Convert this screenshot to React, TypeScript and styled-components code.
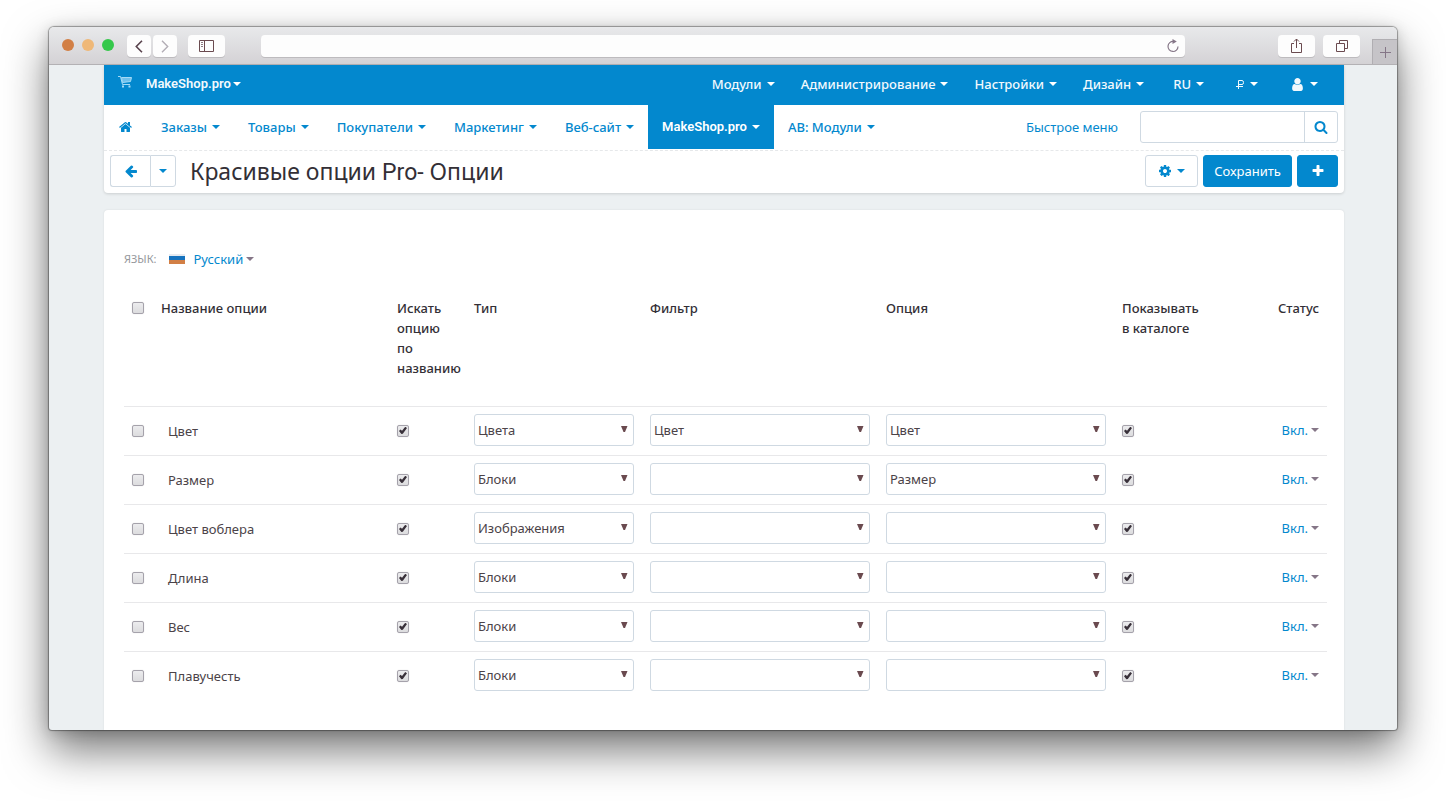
import React from "react";
import styled, { createGlobalStyle, css } from "styled-components";

const blue = "#0388ce";
const line = "#cfd9e2";

const GlobalStyle = createGlobalStyle`
  * { box-sizing: border-box; }
  body {
    margin: 0;
    background: #fff;
    color: #4b4348;
    font-family: "Noto Sans", "Open Sans", sans-serif;
    font-size: 13px;
    line-height: 20px;
  }
  button, input, select { font: inherit; color: inherit; margin: 0; }
  button { cursor: pointer; }
  a { color: ${blue}; text-decoration: none; }
`;

const Desktop = styled.div`
  padding: 27px 49px 71px;
`;

const BrowserWindow = styled.div`
  border-radius: 5px 5px 3px 3px;
  overflow: hidden;
  background: #ecf0f2;
  box-shadow:
    0 0 1px 1px rgba(0, 0, 0, 0.35),
    0 2px 14px rgba(0, 0, 0, 0.16),
    0 20px 44px rgba(0, 0, 0, 0.54);
`;

const Chrome = styled.div`
  display: flex;
  align-items: flex-start;
  height: 38px;
  padding: 8px 0 0 13px;
  border-bottom: 1px solid #b3b1b4;
  background: linear-gradient(#e8e9eb, #d4d2d5);
`;

const Lights = styled.div`
  display: flex;
  gap: 8px;
  padding: 4px 13px 0 0;
`;

const Light = styled.span<{ $color: string }>`
  width: 12px;
  height: 12px;
  border-radius: 50%;
  background: ${(p) => p.$color};
`;

const ChromeButton = styled.button<{ $wide?: boolean }>`
  display: flex;
  align-items: center;
  justify-content: center;
  width: ${(p) => (p.$wide ? 37 : 24)}px;
  height: 22px;
  padding: 0;
  border: 0;
  border-radius: 4px;
  background: #fdfdfd;
  box-shadow: 0 1px 0 #bdbbbe;
`;

const ChromeGroup = styled.div<{ $gap: number }>`
  display: flex;
  gap: ${(p) => p.$gap}px;
`;

const AddressBar = styled.div`
  display: flex;
  flex: 1;
  align-items: center;
  height: 22px;
  margin: 0 93px 0 36px;
  padding-right: 5px;
  border-radius: 4px;
  background: #fdfdfd;
  box-shadow: 0 1px 0 #bdbbbe;
`;

const Address = styled.input`
  flex: 1;
  min-width: 0;
  height: 22px;
  padding: 0 8px;
  border: 0;
  outline: 0;
  background: none;
`;

const PlainButton = styled.button`
  display: flex;
  padding: 0;
  border: 0;
  background: none;
`;

const NewTab = styled.button`
  display: flex;
  align-items: center;
  justify-content: center;
  align-self: flex-end;
  width: 25px;
  height: 25px;
  margin-left: 12px;
  padding: 0;
  border: 1px solid #b0aeb2;
  border-width: 1px 0 0 1px;
  background: #c6c4c8;
`;

const Spacer = styled.span`
  width: 11px;
`;

const Page = styled.div`
  padding: 0 53px 0 55px;
`;

const Header = styled.header`
  margin-bottom: 17px;
  border-radius: 0 0 4px 4px;
  background: #fff;
  box-shadow: 0 1px 3px rgba(0, 0, 0, 0.14);
`;

const TopBar = styled.nav`
  display: flex;
  align-items: stretch;
  height: 40px;
  padding: 0 10px 2px 0;
  background: ${blue};
`;

const Caret = styled.span<{ $color?: string }>`
  flex: none;
  width: 8px;
  border: 4px solid transparent;
  border-top-color: ${(p) => p.$color ?? "currentColor"};
  border-bottom: 0;
`;

const TopLink = styled.a<{ $compact?: boolean }>`
  display: flex;
  align-items: center;
  gap: 5px;
  padding: 0 ${(p) => (p.$compact ? 16 : 13)}px;
  color: #f2f9fd;
  font-weight: 500;
  ${Caret} { color: #fff; }
`;

const CartLink = styled(TopLink)`
  padding: 0 0 4px 14px;
`;

const BrandLink = styled(TopLink)`
  gap: 2px;
  padding-left: 14px;
`;

const Latin = styled.span`
  font-family: Roboto, sans-serif;
  font-weight: 600;
`;

const Push = styled.span`
  flex: 1;
`;

const NavBar = styled.nav`
  display: flex;
  align-items: flex-start;
  height: 46px;
  padding: 0 6px 0 1px;
  border-bottom: 1px dashed #e6e8ea;
`;

const NavLink = styled.a<{ $active?: boolean }>`
  display: flex;
  align-items: center;
  gap: 5px;
  height: 44px;
  padding: 0 14px;
  font-weight: 500;
  ${(p) => p.$active && css`
    background: ${blue};
    color: #fff;
  `}
`;

const QuickLink = styled.a`
  margin: 12px 22px 0 0;
`;

const Search = styled.form`
  display: flex;
  width: 198px;
  height: 32px;
  margin-top: 6px;
  border: 1px solid ${line};
  border-radius: 3px;
`;

const SearchInput = styled.input`
  flex: 1;
  min-width: 0;
  padding: 0 8px;
  border: 0;
  border-right: 1px solid ${line};
  outline: 0;
  background: none;
`;

const SearchButton = styled.button`
  display: flex;
  align-items: center;
  justify-content: center;
  width: 32px;
  padding: 0;
  border: 0;
  background: none;
  color: ${blue};
`;

const TitleRow = styled.div`
  display: flex;
  gap: 5px;
  height: 42px;
  padding: 4px 6px 6px;
`;

const Button = styled.button<{ $primary?: boolean; $width: number }>`
  display: flex;
  align-items: center;
  justify-content: center;
  gap: 5px;
  width: ${(p) => p.$width}px;
  height: 32px;
  padding: 0;
  border: 1px solid ${(p) => (p.$primary ? blue : line)};
  border-radius: 3px;
  background: ${(p) => (p.$primary ? blue : "#fff")};
  color: ${(p) => (p.$primary ? "#fff" : blue)};
`;

const ButtonGroup = styled.div`
  display: flex;
  margin-right: 9px;
  ${Button}:first-child { border-radius: 3px 0 0 3px; border-right: 0; }
  ${Button}:last-child { border-radius: 0 3px 3px 0; }
`;

const Title = styled.h1`
  flex: 1;
  margin: 0;
  color: #332f36;
  font-size: 23px;
  font-weight: 400;
  line-height: 32px;
  span { font-family: Roboto, sans-serif; }
`;

const Panel = styled.main`
  padding: 39px 17px 30px 20px;
  border-radius: 4px 4px 0 0;
  background: #fff;
  box-shadow: 0 0 2px rgba(0, 0, 0, 0.1);
`;

const LanguageRow = styled.div`
  display: flex;
  align-items: center;
  height: 20px;
  margin-bottom: 21px;
`;

const LanguageLabel = styled.span`
  margin-right: 13px;
  color: #96989c;
  font-size: 11px;
  text-transform: uppercase;
`;

const MenuLink = styled.a<{ $gap: number }>`
  display: inline-flex;
  align-items: center;
  gap: ${(p) => p.$gap}px;
`;

const Flag = styled.svg`
  margin-right: 5px;
`;

const Table = styled.table`
  width: 100%;
  border-collapse: collapse;
  table-layout: fixed;
`;

const Col = styled.col<{ $width?: number }>`
  width: ${(p) => (p.$width ? `${p.$width}px` : "auto")};
`;

const HeadCell = styled.th<{ $right?: boolean }>`
  height: 116px;
  padding: 8px;
  color: #332f36;
  font-weight: 500;
  text-align: ${(p) => (p.$right ? "right" : "left")};
  vertical-align: top;
`;

const Cell = styled.td<{ $right?: boolean; $name?: boolean }>`
  height: 49px;
  padding: ${(p) => (p.$name ? "0 8px 0 15px" : "0 8px 2px")};
  border-top: 1px solid #e8e8ea;
  text-align: ${(p) => (p.$right ? "right" : "left")};
  vertical-align: middle;
`;

const Checkbox = styled.input.attrs({ type: "checkbox" })`
  appearance: none;
  display: block;
  width: 12px;
  height: 12px;
  margin: 4px 0 2px;
  border: 1px solid #a5a2ab;
  border-radius: 2px;
  background: linear-gradient(#ececee, #dcdcde);
  box-shadow: 0 0 1px rgba(0, 0, 0, 0.2);
  &:checked::after {
    content: "";
    display: block;
    height: 8px;
    margin: 1px;
    background: #39313a;
    clip-path: polygon(0 55%, 18% 36%, 38% 52%, 78% 2%, 100% 18%, 48% 92%, 30% 94%);
  }
`;

const SelectWrap = styled.div`
  display: grid;
  align-items: center;
  > * { grid-area: 1 / 1; }
`;

const Select = styled.select`
  appearance: none;
  width: 100%;
  height: 32px;
  padding: 0 24px 0 3px;
  border: 1px solid ${line};
  border-radius: 3px;
  background: #fff;
`;

const Arrow = styled.svg`
  justify-self: end;
  margin-right: 6px;
  pointer-events: none;
`;

const icons = {
  home: "M1408 992v480q0 26-19 45t-45 19H960v-384H704v384H320q-26 0-45-19t-19-45V992q0-1 .5-3t.5-3l575-474 575 474q1 2 1 6zm223-69l-62 74q-8 9-21 11h-3q-13 0-21-7L832 424l-692 577q-12 8-24 7-13-2-21-11l-62-74q-8-10-7-23.500T37 878l719-599q32-26 76-26t76 26l244 204V288q0-14 9-23t23-9h192q14 0 23 9t9 23v408l219 182q10 8 11 21.500t-7 23.500z",
  user: "M1536 1399q0 109-62.500 187t-150.500 78H469q-88 0-150.500-78T256 1399q0-85 8.500-160.500t31.500-152 58.500-131 94-89T583 832q131 128 313 128t313-128q76 0 134.500 34.500t94 89 58.500 131 31.500 152 8.500 160.500zm-256-887q0 159-112.500 271.500T896 896 624.500 783.500 512 512t112.500-271.500T896 128t271.500 112.500T1280 512z",
  back: "M1664 896v128q0 53-32.500 90.500t-84.500 37.500H843l293 294q38 36 38 90t-38 90l-75 76q-37 37-90 37-52 0-91-37L229 1051q-37-37-37-91 0-53 37-90l651-652q38-37 91-37 52 0 90 37l75 75q38 38 38 91t-38 91L843 768h704q52 0 84.500 37.500T1664 896z",
  plus: "M1600 736v192q0 40-28 68t-68 28h-416v416q0 40-28 68t-68 28H800q-40 0-68-28t-28-68v-416H288q-40 0-68-28t-28-68V736q0-40 28-68t68-28h416V224q0-40 28-68t68-28h192q40 0 68 28t28 68v416h416q40 0 68 28t28 68z",
  search: "M1216 832q0-185-131.500-316.500T768 384 451.500 515.500 320 832t131.500 316.500T768 1280t316.500-131.500T1216 832zm512 832q0 52-38 90t-90 38q-54 0-90-38l-343-342q-179 124-399 124-143 0-273.500-55.500t-225-150-150-225T64 832t55.500-273.500 150-225 225-150T768 128t273.500 55.500 225 150 150 225T1472 832q0 220-124 399l343 343q37 37 37 90z",
  cog: "M1152 896q0-106-75-181t-181-75-181 75-75 181 75 181 181 75 181-75 75-181zm512-109v222q0 12-8 23t-20 13l-185 28q-19 54-39 91 35 50 107 138 10 12 10 25t-9 23q-27 37-99 108t-94 71q-12 0-26-9l-138-108q-44 23-91 38-16 136-29 186-7 28-36 28H785q-14 0-24.500-8.500T749 1634l-28-184q-49-16-90-37l-141 107q-10 9-25 9-14 0-25-11-126-114-165-168-7-10-7-23 0-12 8-23 15-21 51-66.500t54-70.500q-27-50-41-99l-183-27q-13-2-21-12.500t-8-23.500V783q0-12 8-23t19-13l186-28q14-46 39-92-40-57-107-138-10-12-10-24 0-10 9-23 26-36 98.500-107.500T465 263q13 0 26 10l138 107q44-23 91-38 16-136 29-186 7-28 36-28h222q14 0 24.500 8.500T1043 158l28 184q49 16 90 37l142-107q9-9 24-9 13 0 25 10 129 119 165 170 7 8 7 22 0 12-8 23-15 21-51 66.500t-54 70.500q26 50 41 98l183 28q13 2 21 12.500t8 23.500z",
};

function Icon({ name, size = 14 }: { name: keyof typeof icons; size?: number }) {
  return (
    <svg width={size} height={size} viewBox="0 0 1792 1792" fill="currentColor" aria-hidden="true">
      <path d={icons[name]} />
    </svg>
  );
}

const topMenu = ["Модули", "Администрирование", "Настройки", "Дизайн"];
const mainMenu = ["Заказы", "Товары", "Покупатели", "Маркетинг", "Веб-сайт"];
const rows = [
  { name: "Цвет", type: "Цвета", filter: "Цвет", option: "Цвет" },
  { name: "Размер", type: "Блоки", filter: "", option: "Размер" },
  { name: "Цвет воблера", type: "Изображения", filter: "", option: "" },
  { name: "Длина", type: "Блоки", filter: "", option: "" },
  { name: "Вес", type: "Блоки", filter: "", option: "" },
  { name: "Плавучесть", type: "Блоки", filter: "", option: "" },
];
const types = ["Цвета", "Блоки", "Изображения"];
const names = ["", "Цвет", "Размер"];

function Dropdown({ label, value, options }: { label: string; value: string; options: string[] }) {
  return (
    <SelectWrap>
      <Select aria-label={label} defaultValue={value}>
        {options.map((o) => <option key={o} value={o}>{o}</option>)}
      </Select>
      <Arrow width="7" height="7" viewBox="0 0 7 7" aria-hidden="true">
        <path d="M0 0h6.500L4 6H2.500z" fill="#6a4a4f" />
      </Arrow>
    </SelectWrap>
  );
}

function BrowserChrome() {
  return (
    <Chrome>
      <Lights>
        <Light $color="#d27f45" />
        <Light $color="#efb878" />
        <Light $color="#35c84b" />
      </Lights>
      <ChromeGroup $gap={2}>
        <ChromeButton aria-label="Назад">
          <svg width="8" height="13" viewBox="0 0 8 13" fill="none" stroke="#59434d" strokeWidth="1.600"><path d="M7 .8 1.300 6.500 7 12.200" /></svg>
        </ChromeButton>
        <ChromeButton aria-label="Вперёд">
          <svg width="8" height="13" viewBox="0 0 8 13" fill="none" stroke="#b3aeb6" strokeWidth="1.400"><path d="m1 .8 5.700 5.700L1 12.200" /></svg>
        </ChromeButton>
      </ChromeGroup>
      <Spacer />
      <ChromeButton $wide aria-label="Боковая панель">
        <svg width="15" height="12" viewBox="0 0 15 12" fill="none" stroke="#6a4a4f"><path d="M.5.5h14v11H.5zM5.500.5v11" /><path d="M2 2.500h2M2 4.500h2M2 6.500h2" stroke="#8c7b83" /></svg>
      </ChromeButton>
      <AddressBar>
        <Address aria-label="Адрес" />
        <PlainButton aria-label="Обновить">
          <svg width="14" height="14" viewBox="0 0 14 14" fill="none" stroke="#857687" strokeWidth="1.200"><path d="M7.500 2.500A5 5 0 1 0 12 7.500" /><path d="M6.500 0 10.800 2.600 6.500 5z" fill="#857687" stroke="none" /></svg>
        </PlainButton>
      </AddressBar>
      <ChromeGroup $gap={8}>
        <ChromeButton $wide aria-label="Поделиться">
          <svg width="11" height="16" viewBox="0 0 11 16" fill="none" stroke="#6a4a4f"><path d="M3 5.500H.5v9h10v-9H8M5.500 10V1M3 3.500 5.500 1 8 3.500" /></svg>
        </ChromeButton>
        <ChromeButton $wide aria-label="Вкладки">
          <svg width="12" height="12" viewBox="0 0 12 12" fill="none" stroke="#6a4a4f"><path d="M.5 3.500h8v8h-8zM3.500 3V.5h8v8H9" /></svg>
        </ChromeButton>
      </ChromeGroup>
      <NewTab aria-label="Новая вкладка">
        <svg width="11" height="11" viewBox="0 0 11 11" stroke="#857687"><path d="M5.500 0v11M0 5.500h11" /></svg>
      </NewTab>
    </Chrome>
  );
}

export default function App() {
  return (
    <Desktop>
      <GlobalStyle />
      <BrowserWindow>
        <BrowserChrome />
        <Page>
          <Header>
            <TopBar>
              <CartLink href="#" aria-label="Магазин">
                <svg width="14" height="12" viewBox="0 0 14 12" fill="none" stroke="#a5daf6"><path d="M0 .5h2.500l2 8H12" /><path d="M3.500 1.500h10l-1 4L4.500 6.500z" fill="#6fc0ec" /><path d="M4 10.500h2M10.500 10.500h2" strokeWidth="2" /></svg>
              </CartLink>
              <BrandLink href="#"><Latin>MakeShop.pro</Latin><Caret /></BrandLink>
              <Push />
              {topMenu.map((t) => <TopLink href="#" key={t}>{t}<Caret /></TopLink>)}
              <TopLink href="#" $compact>RU<Caret /></TopLink>
              <TopLink href="#" $compact aria-label="Валюта">
                <svg width="9" height="9" viewBox="0 0 9 9" fill="none" stroke="#f2f9fd"><path d="M2.500 9V.5H6q1.500 0 1.500 2t-1.500 2H2.500M0 6.500h7" /></svg>
                <Caret />
              </TopLink>
              <TopLink href="#" $compact aria-label="Профиль"><Icon name="user" size={15} /><Caret /></TopLink>
            </TopBar>
            <NavBar>
              <NavLink href="#" aria-label="Главная"><Icon name="home" /></NavLink>
              {mainMenu.map((t) => <NavLink href="#" key={t}>{t}<Caret /></NavLink>)}
              <NavLink href="#" $active><Latin>MakeShop.pro</Latin><Caret /></NavLink>
              <NavLink href="#">АВ: Модули<Caret /></NavLink>
              <Push />
              <QuickLink href="#">Быстрое меню</QuickLink>
              <Search>
                <SearchInput aria-label="Поиск" />
                <SearchButton type="button" aria-label="Найти"><Icon name="search" /></SearchButton>
              </Search>
            </NavBar>
            <TitleRow>
              <ButtonGroup>
                <Button $width={40} aria-label="Назад к списку"><Icon name="back" /></Button>
                <Button $width={26} aria-label="Другие действия"><Caret /></Button>
              </ButtonGroup>
              <Title>Красивые опции <span>Pro-</span> Опции</Title>
              <Button $width={53} aria-label="Параметры"><Icon name="cog" /><Caret /></Button>
              <Button $primary $width={89}>Сохранить</Button>
              <Button $primary $width={41} aria-label="Добавить"><Icon name="plus" /></Button>
            </TitleRow>
          </Header>
          <Panel>
            <LanguageRow>
              <LanguageLabel>Язык:</LanguageLabel>
              <MenuLink href="#" $gap={3}>
                <Flag width="16" height="11" viewBox="0 0 16 11"><path d="M0 0h16v4H0z" fill="#e6eaf0" /><path d="M0 2h16v5H0z" fill="#1673be" /><path d="M0 6h16v4H0z" fill="#d27f45" /></Flag>
                Русский<Caret $color="#857687" />
              </MenuLink>
            </LanguageRow>
            <Table>
              <colgroup>
                <Col $width={29} /><Col /><Col $width={77} /><Col $width={176} /><Col /><Col /><Col $width={97} /><Col $width={116} />
              </colgroup>
              <thead>
                <tr>
                  <HeadCell><Checkbox aria-label="Выбрать все" /></HeadCell>
                  <HeadCell>Название опции</HeadCell>
                  <HeadCell>Искать опцию по названию</HeadCell>
                  <HeadCell>Тип</HeadCell>
                  <HeadCell>Фильтр</HeadCell>
                  <HeadCell>Опция</HeadCell>
                  <HeadCell>Показывать в каталоге</HeadCell>
                  <HeadCell $right>Статус</HeadCell>
                </tr>
              </thead>
              <tbody>
                {rows.map((r) => (
                  <tr key={r.name}>
                    <Cell><Checkbox aria-label={`Выбрать: ${r.name}`} /></Cell>
                    <Cell $name>{r.name}</Cell>
                    <Cell><Checkbox defaultChecked aria-label="Искать опцию по названию" /></Cell>
                    <Cell><Dropdown label="Тип" value={r.type} options={types} /></Cell>
                    <Cell><Dropdown label="Фильтр" value={r.filter} options={names} /></Cell>
                    <Cell><Dropdown label="Опция" value={r.option} options={names} /></Cell>
                    <Cell><Checkbox defaultChecked aria-label="Показывать в каталоге" /></Cell>
                    <Cell $right><MenuLink href="#" $gap={3}>Вкл.<Caret $color="#857687" /></MenuLink></Cell>
                  </tr>
                ))}
              </tbody>
            </Table>
          </Panel>
        </Page>
      </BrowserWindow>
    </Desktop>
  );
}
